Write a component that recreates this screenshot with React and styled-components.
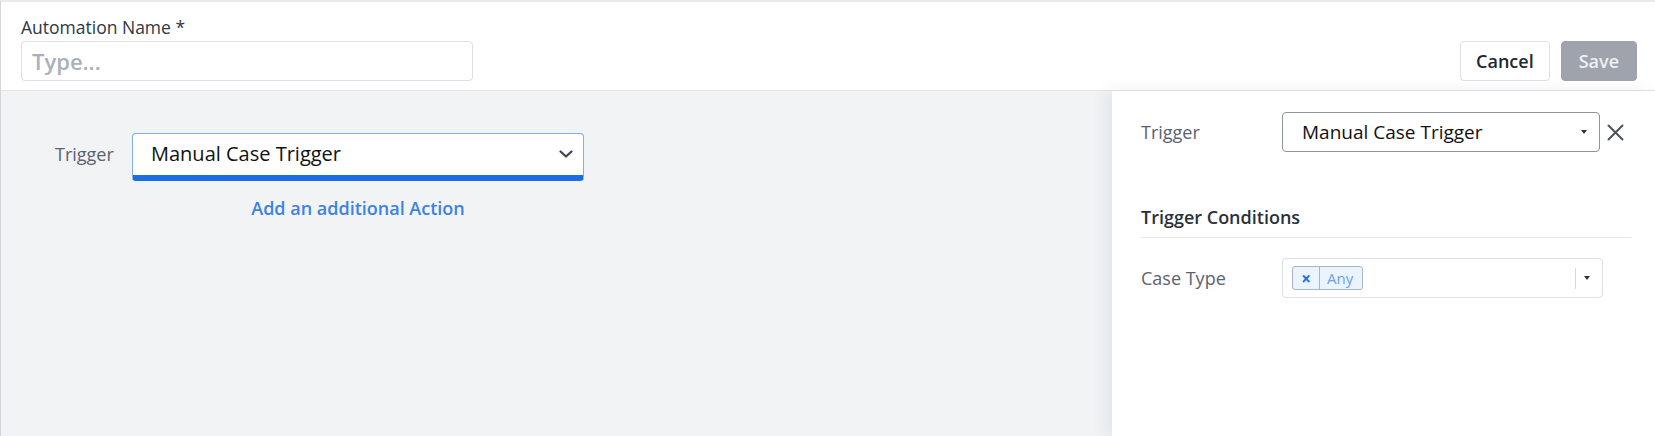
import React from 'react';
import styled, { createGlobalStyle } from 'styled-components';

const Global = createGlobalStyle`
  html, body {
    margin: 0;
    padding: 0;
    background: #ffffff;
    font-family: "Open Sans", "Noto Sans", sans-serif;
  }
  * { box-sizing: border-box; }
`;

const Page = styled.div`
  height: 436px;
  display: flex;
  flex-direction: column;
  border-top: 2px solid #e9eaed;
  border-left: 1px solid #d4d6da;
  overflow: hidden;
`;

const Header = styled.header`
  height: 89px;
  flex: none;
  display: flex;
  justify-content: space-between;
  align-items: flex-end;
  padding: 0 18px 9px 20px;
  background: #fff;
  border-bottom: 1px solid #e2e4e8;
`;

const NameField = styled.div`
  display: flex;
  flex-direction: column;
`;

const FieldLabel = styled.label`
  font-size: 17.5px;
  color: #2f3744;
  margin-bottom: 3px;
  line-height: 22px;
`;

const TextInput = styled.input`
  width: 452px;
  height: 40px;
  border: 1px solid #dcdfe3;
  border-radius: 4px;
  padding: 0 10px;
  font-family: inherit;
  font-size: 22px;
  font-weight: 600;
  color: #2f3744;
  &::placeholder { color: #a9b0ba; }
  &:focus { outline: none; }
`;

const Actions = styled.div`
  display: flex;
  gap: 11px;
`;

const Button = styled.button`
  height: 40px;
  padding: 0 ${p => (p.$primary ? '17px' : '15px')};
  border-radius: 4px;
  font-family: inherit;
  font-size: 18px;
  font-weight: 600;
  border: 1px solid ${p => (p.$primary ? '#9ea3ac' : '#dcdfe3')};
  background: ${p => (p.$primary ? '#9ea3ac' : '#fff')};
  color: ${p => (p.$primary ? '#eef0f3' : '#1f2733')};
`;

const Body = styled.div`
  flex: 1;
  display: flex;
`;

const Canvas = styled.main`
  flex: 1;
  background: #f2f3f5;
  padding: 42px 0 0 54px;
`;

const TriggerBlock = styled.div`
  display: grid;
  grid-template-columns: 77px 452px;
  row-gap: 15px;
  align-items: center;
`;

const MainLabel = styled.span`
  font-size: 18px;
  color: #5b6270;
  padding-bottom: 6px;
`;

const MainSelect = styled.div`
  height: 48px;
  display: flex;
  align-items: center;
  justify-content: space-between;
  padding: 0 9px 2px 18px;
  background: #fff;
  border: 1px solid #7eaef0;
  border-bottom: 6px solid #1a6ee2;
  border-radius: 4px;
  font-size: 20px;
  font-weight: 500;
  color: #111;
`;

const AddLink = styled.a`
  grid-column: 2;
  text-align: center;
  font-size: 18px;
  font-weight: 600;
  color: #3b82e6;
  cursor: pointer;
`;

const Panel = styled.aside`
  width: 543px;
  flex: none;
  background: #fff;
  padding: 21px 24px 0 29px;
  box-shadow: -6px 0 14px rgba(40, 50, 70, 0.08);
  position: relative;
`;

const PanelRow = styled.div`
  display: flex;
  align-items: center;
`;

const PanelLabel = styled.span`
  width: 141px;
  flex: none;
  font-size: 18px;
  color: #5b6270;
`;

const PanelSelect = styled.div`
  width: ${p => p.$width}px;
  height: 40px;
  display: flex;
  align-items: center;
  justify-content: space-between;
  padding: ${p => p.$pad};
  border: 1px solid ${p => p.$strong ? '#8e949d' : '#dcdfe3'};
  border-radius: 4px;
  font-size: 19px;
  font-weight: 500;
  color: #111;
`;

const Caret = styled.span`
  width: 0;
  height: 0;
  border-left: 3.5px solid transparent;
  border-right: 3.5px solid transparent;
  border-top: 4px solid #333;
`;

const CloseBtn = styled.span`
  margin-left: 7px;
  display: flex;
  color: #4b525e;
`;

const SectionTitle = styled.h3`
  margin: 53px 0 0;
  padding-bottom: 8px;
  border-bottom: 1px solid #e5e7ea;
  font-size: 18px;
  font-weight: 600;
  color: #2a313c;
  line-height: 24px;
`;

const ConditionRow = styled(PanelRow)`
  margin-top: 20px;
`;

const Tags = styled.div`
  display: flex;
  gap: 4px;
`;

const Tag = styled.div`
  height: 24px;
  display: flex;
  align-items: stretch;
  border: 1px solid #a9b4c1;
  border-radius: 3px;
  background: #eaf4ff;
  font-size: 15px;
`;

const TagRemove = styled.span`
  width: 27px;
  display: flex;
  align-items: center;
  justify-content: center;
  border-right: 1px solid #a9b4c1;
  color: #1f6fe0;
  font-weight: 700;
  font-size: 17px;
`;

const TagText = styled.span`
  padding: 0 9px 0 7px;
  display: flex;
  align-items: center;
  color: #6d9ef0;
  font-weight: 400;
`;

const Indicators = styled.div`
  display: flex;
  align-items: center;
  gap: 8px;
`;

const Separator = styled.span`
  width: 1px;
  height: 21px;
  background: #d6d9dd;
`;

const Chevron = () => (
  <svg width="16" height="10" viewBox="0 0 16 10" fill="none">
    <path d="M2.5 2.5l5.5 5 5.5-5" stroke="#3d4450" strokeWidth="2.2" strokeLinecap="round" strokeLinejoin="round" />
  </svg>
);

const XIcon = () => (
  <svg width="17" height="17" viewBox="0 0 17 17" fill="none">
    <path d="M1.5 1.5l14 14M15.5 1.5l-14 14" stroke="#4b525e" strokeWidth="2" strokeLinecap="round" />
  </svg>
);

export default function App() {
  return (
    <>
      <Global />
      <Page>
        <Header>
          <NameField>
            <FieldLabel>Automation Name *</FieldLabel>
            <TextInput placeholder="Type..." />
          </NameField>
          <Actions>
            <Button>Cancel</Button>
            <Button $primary>Save</Button>
          </Actions>
        </Header>
        <Body>
          <Canvas>
            <TriggerBlock>
              <MainLabel>Trigger</MainLabel>
              <MainSelect>
                Manual Case Trigger
                <Chevron />
              </MainSelect>
              <AddLink>Add an additional Action</AddLink>
            </TriggerBlock>
          </Canvas>
          <Panel>
            <PanelRow>
              <PanelLabel>Trigger</PanelLabel>
              <PanelSelect $width={318} $pad="0 12px 0 19px" $strong>
                Manual Case Trigger
                <Caret />
              </PanelSelect>
              <CloseBtn><XIcon /></CloseBtn>
            </PanelRow>
            <SectionTitle>Trigger Conditions</SectionTitle>
            <ConditionRow>
              <PanelLabel>Case Type</PanelLabel>
              <PanelSelect $width={321} $pad="0 12px 0 9px">
                <Tags>
                  <Tag>
                    <TagRemove>×</TagRemove>
                    <TagText>Any</TagText>
                  </Tag>
                </Tags>
                <Indicators>
                  <Separator />
                  <Caret />
                </Indicators>
              </PanelSelect>
            </ConditionRow>
          </Panel>
        </Body>
      </Page>
    </>
  );
}
